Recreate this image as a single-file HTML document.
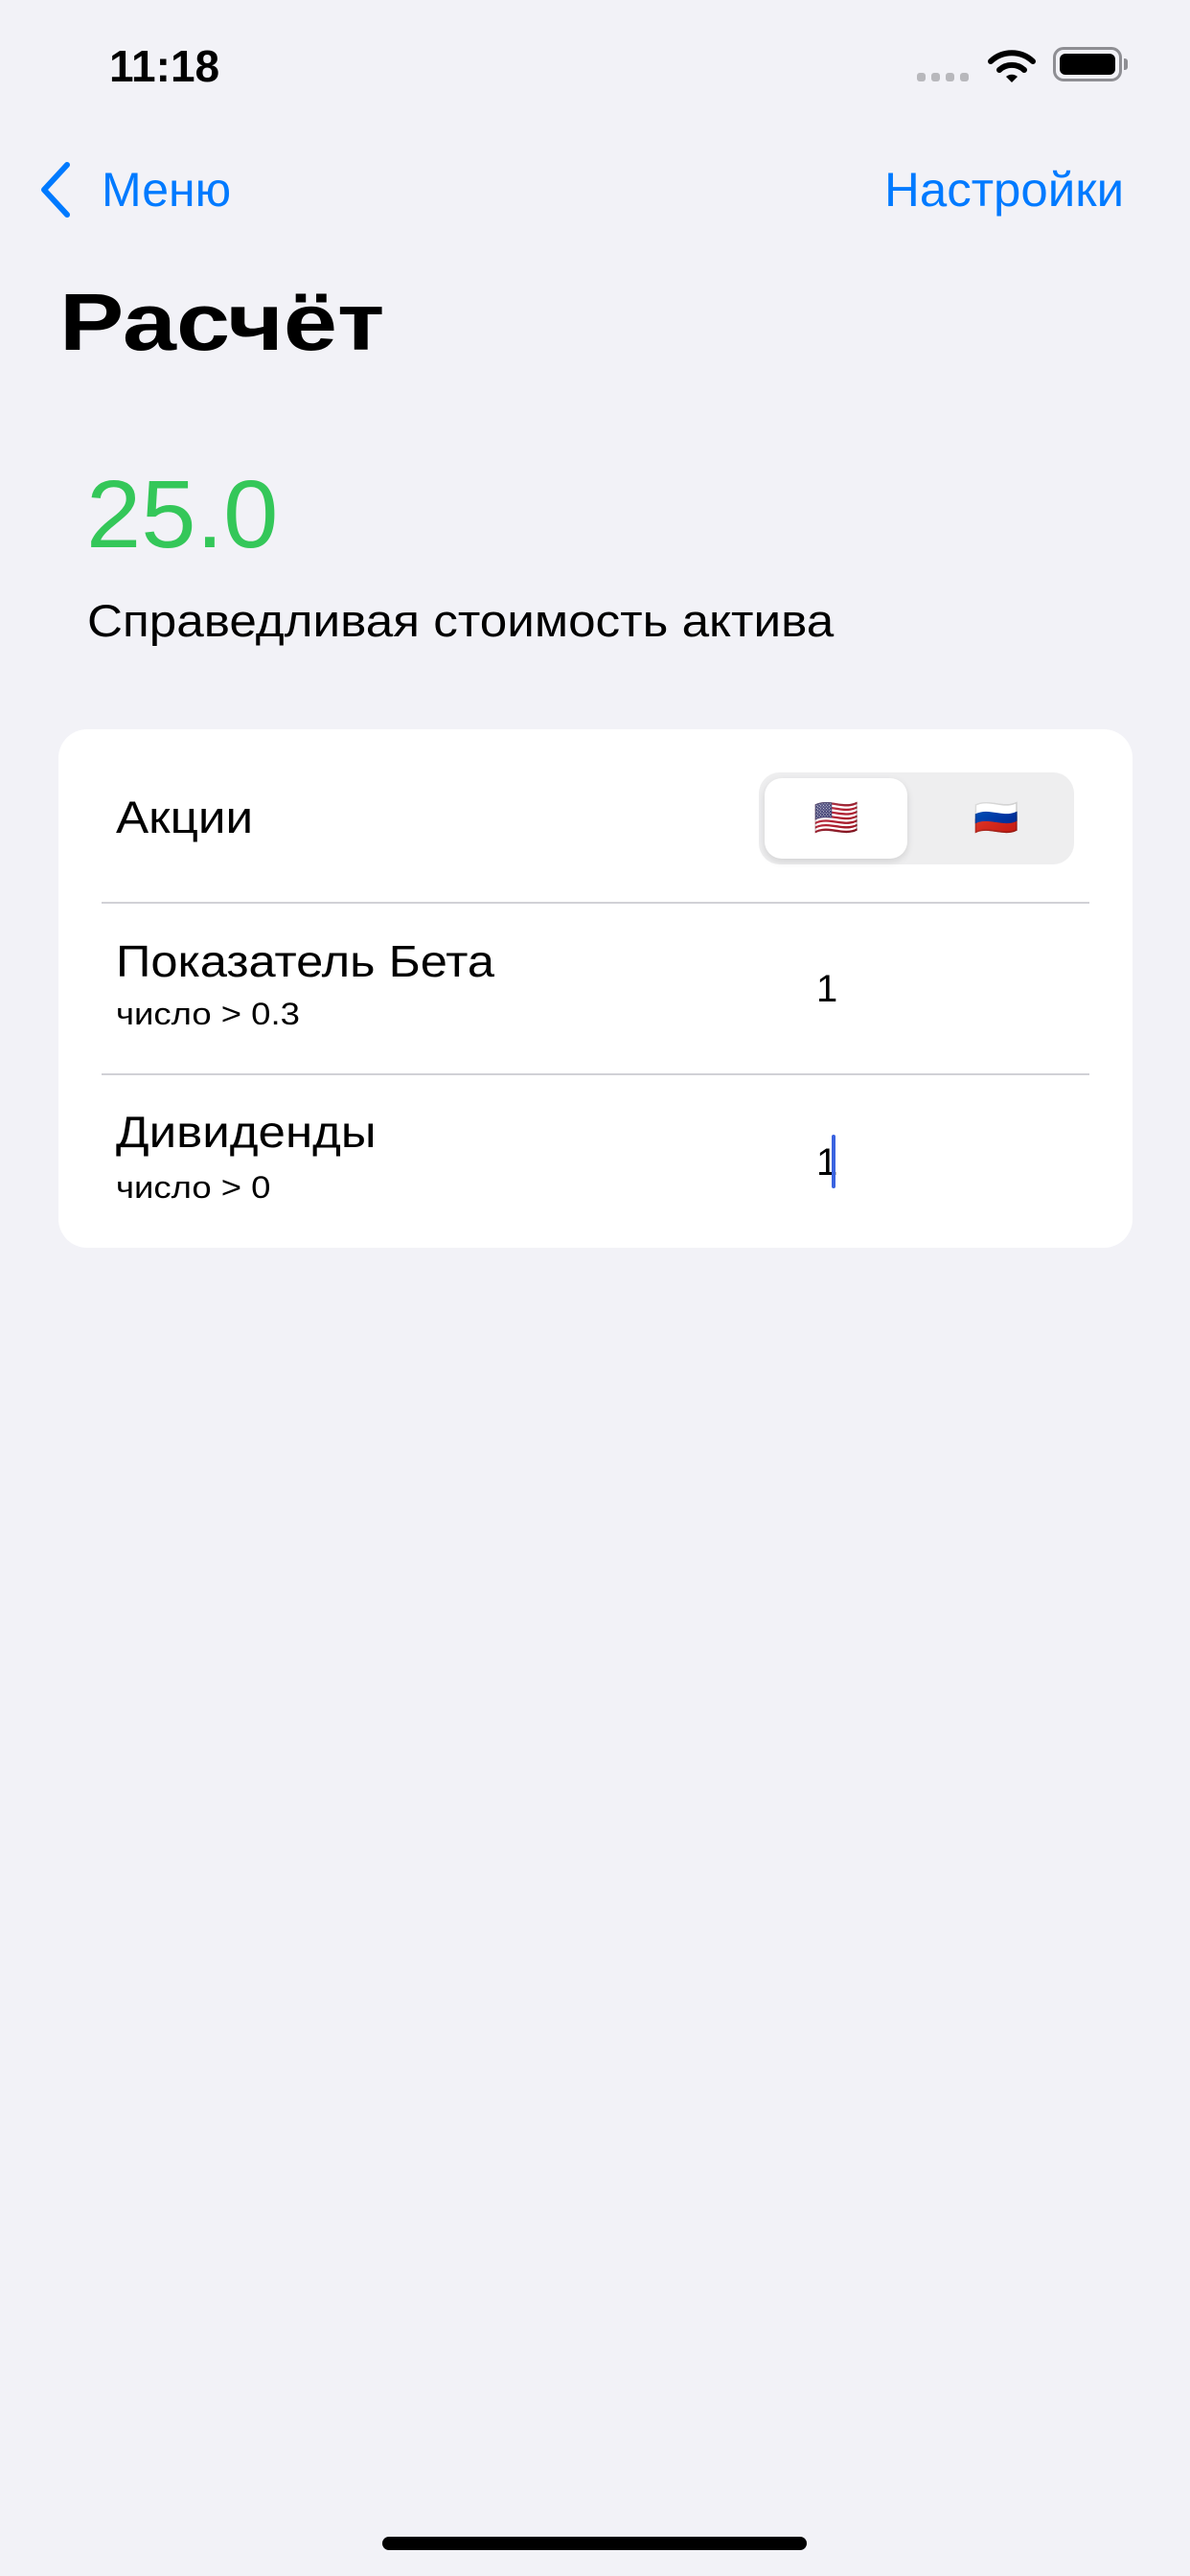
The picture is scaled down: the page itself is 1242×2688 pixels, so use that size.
<!DOCTYPE html>
<html><head><meta charset="utf-8"><style>
*{margin:0;padding:0;box-sizing:border-box}
body{width:1242px;height:2688px;background:#F2F2F7;position:relative;overflow:hidden;font-family:"Liberation Sans","DejaVu Sans",sans-serif;color:#000}
.a{position:absolute;white-space:nowrap;line-height:1;transform-origin:0 0}
</style></head><body>
<div class="a" style="left:114px;top:46px;font-size:46px;font-weight:bold">11:18</div>
<div class="a" style="left:957px;top:76px;width:9px;height:9px;border-radius:3px;background:#b8b8bc"></div>
<div class="a" style="left:972px;top:76px;width:9px;height:9px;border-radius:3px;background:#b8b8bc"></div>
<div class="a" style="left:987px;top:76px;width:9px;height:9px;border-radius:3px;background:#b8b8bc"></div>
<div class="a" style="left:1002px;top:76px;width:9px;height:9px;border-radius:3px;background:#b8b8bc"></div>
<svg class="a" style="left:1030px;top:51px" width="52" height="36" viewBox="0 0 52 36">
<path d="M4 13 A32 32 0 0 1 48 13" stroke="#000" stroke-width="6" fill="none" stroke-linecap="round"/>
<path d="M13 22 A19 19 0 0 1 39 22" stroke="#000" stroke-width="6" fill="none" stroke-linecap="round"/>
<path d="M20 29 L26 35 L32 29 A9 9 0 0 0 20 29Z" fill="#000"/></svg>
<div class="a" style="left:1099px;top:49px;width:72px;height:36px;border:3px solid #8e8e93;border-radius:11px;padding:4px"><div style="width:100%;height:100%;background:#000;border-radius:6px"></div></div>
<div class="a" style="left:1173px;top:61px;width:4px;height:12px;background:#8e8e93;border-radius:0 3px 3px 0"></div>
<svg class="a" style="left:38px;top:168px" width="40" height="60" viewBox="0 0 40 60"><path d="M32 4 L8 30 L32 56" stroke="#007AFF" stroke-width="6" fill="none" stroke-linecap="round" stroke-linejoin="round"/></svg>
<div class="a" style="left:106px;top:173px;font-size:50px;color:#007AFF">Меню</div>
<div class="a" style="left:923px;top:173px;font-size:50px;color:#007AFF;transform:scaleX(1.02)">Настройки</div>
<div class="a" style="left:62px;top:294px;font-size:84px;font-weight:bold;transform:scaleX(1.2)">Расчёт</div>
<div class="a" style="left:90px;top:487px;font-size:100px;color:#34C759;transform:scaleX(1.03)">25.0</div>
<div class="a" style="left:91px;top:624px;font-size:47px;transform:scaleX(1.09)">Справедливая стоимость актива</div>
<div class="a" style="left:61px;top:761px;width:1121px;height:541px;background:#fff;border-radius:30px"></div>
<div class="a" style="left:121px;top:829px;font-size:47px;transform:scaleX(1.09)">Акции</div>
<div class="a" style="left:792px;top:806px;width:329px;height:96px;background:#EEEEEF;border-radius:22px"></div>
<div class="a" style="left:798px;top:812px;width:149px;height:84px;background:#fff;border-radius:18px;box-shadow:0 3px 8px rgba(0,0,0,.12)"></div>
<div class="a" style="left:849px;top:835px;font-size:38px;font-family:'Noto Color Emoji','DejaVu Sans',sans-serif">🇺🇸</div>
<div class="a" style="left:1016px;top:835px;font-size:38px;font-family:'Noto Color Emoji','DejaVu Sans',sans-serif">🇷🇺</div>
<div class="a" style="left:106px;top:941px;width:1031px;height:2px;background:#d1d1d6"></div>
<div class="a" style="left:121px;top:980px;font-size:46px;transform:scaleX(1.1)">Показатель Бета</div>
<div class="a" style="left:121px;top:1042px;font-size:32px;transform:scaleX(1.14)">число &gt; 0.3</div>
<div class="a" style="left:852px;top:1012px;font-size:40px">1</div>
<div class="a" style="left:106px;top:1120px;width:1031px;height:2px;background:#d1d1d6"></div>
<div class="a" style="left:121px;top:1158px;font-size:46px;transform:scaleX(1.11)">Дивиденды</div>
<div class="a" style="left:121px;top:1223px;font-size:32px;transform:scaleX(1.14)">число &gt; 0</div>
<div class="a" style="left:852px;top:1193px;font-size:40px">1</div>
<div class="a" style="left:868px;top:1184px;width:4px;height:56px;background:#3a63e0;border-radius:2px"></div>
<div class="a" style="left:399px;top:2647px;width:443px;height:14px;background:#000;border-radius:7px"></div>
</body></html>
